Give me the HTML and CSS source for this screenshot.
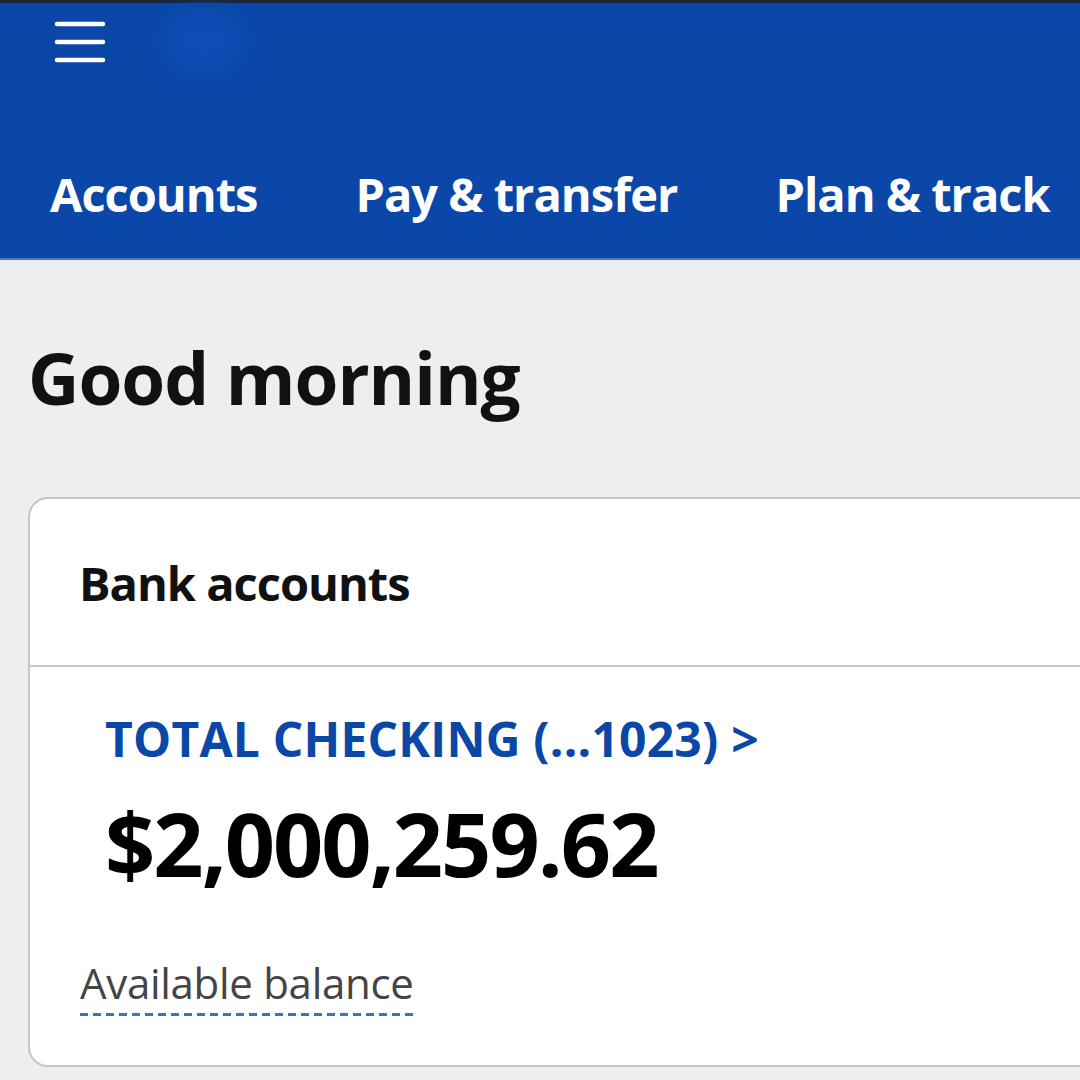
FILE: index.html
```html
<!DOCTYPE html>
<html>
<head>
<meta charset="utf-8">
<link rel="stylesheet" href="styles.css">
</head>
<body>
<div class="topstrip"></div>
<header class="header">
  <div class="header-top">
    <svg class="hamburger" width="52" height="42" viewBox="0 0 52 42">
      <path d="M3 3H49M3 21H49M3 39H49" stroke="#ffffff" stroke-width="4.5" stroke-linecap="round" fill="none"/>
    </svg>
    <div class="logo-blur"></div>
  </div>
  <nav class="nav">
    <a class="nav-item">Accounts</a>
    <a class="nav-item">Pay &amp; transfer</a>
    <a class="nav-item">Plan &amp; track</a>
  </nav>
</header>
<main class="main">
  <h1 class="greeting">Good morning</h1>
  <section class="card">
    <div class="card-head">Bank accounts</div>
    <div class="card-body">
      <div class="acct-name">TOTAL CHECKING (...1023) &gt;</div>
      <div class="amount">$2,000,259.62</div>
      <div class="avail"><span class="avail-label">Available balance</span></div>
    </div>
  </section>
</main>
</body>
</html>
```
FILE: styles.css
```css
html, body {
  margin: 0;
  padding: 0;
}
body {
  width: 1080px;
  height: 1080px;
  overflow: hidden;
  background: #edeef0;
  font-family: "Open Sans", "Noto Sans", sans-serif;
}
.topstrip {
  height: 3px;
  background: #1b2638;
}
.header {
  background: #0a47a9;
  height: 255px;
  border-bottom: 2px solid #4f77c4;
  display: flex;
  flex-direction: column;
}
.header-top {
  height: 100px;
  display: flex;
  align-items: flex-start;
  padding: 18px 0 0 54px;
  box-sizing: border-box;
  gap: 58px;
}
.hamburger {
  display: block;
}
.logo-blur {
  width: 80px;
  height: 60px;
  border-radius: 30px;
  background: #0e4db4;
  filter: blur(10px);
  margin-top: -10px;
}
.nav {
  display: flex;
  padding-left: 50px;
  gap: 98px;
  margin-top: 68px;
}
.nav-item {
  color: #ffffff;
  font-size: 47px;
  font-weight: 700;
  letter-spacing: -1px;
  line-height: 1;
  white-space: nowrap;
}
.main {
  padding: 82px 0 0 28px;
}
.greeting {
  margin: 0;
  font-size: 71px;
  font-weight: 700;
  letter-spacing: -1px;
  color: #111111;
  line-height: 1;
}
.card {
  margin-top: 84px;
  width: 1100px;
  background: #ffffff;
  border: 2px solid #c6c6c6;
  border-radius: 20px;
  height: 570px;
  box-sizing: border-box;
}
.card-head {
  height: 168px;
  border-bottom: 2px solid #c6c6c6;
  box-sizing: border-box;
  padding: 54px 0 0 49px;
  font-size: 47px;
  font-weight: 700;
  letter-spacing: -1px;
  color: #111111;
  line-height: 1.3;
}
.card-body {
  padding: 41px 0 0 75px;
}
.acct-name {
  color: #0b47a6;
  font-size: 48px;
  font-weight: 700;
  letter-spacing: 0.2px;
  line-height: 1.3;
}
.amount {
  margin-top: 21px;
  color: #000000;
  font-size: 88px;
  font-weight: 700;
  letter-spacing: -2px;
  line-height: 1.2;
}
.avail {
  margin-top: 61px;
  margin-left: -25px;
}
.avail-label {
  display: inline-block;
  color: #444444;
  font-size: 42px;
  font-weight: 400;
  letter-spacing: -0.3px;
  line-height: 1.2;
  padding-bottom: 8px;
  background-image: repeating-linear-gradient(to right, #3a72c4 0 8px, transparent 8px 13px);
  background-size: 100% 3px;
  background-position: left bottom;
  background-repeat: no-repeat;
}
```
